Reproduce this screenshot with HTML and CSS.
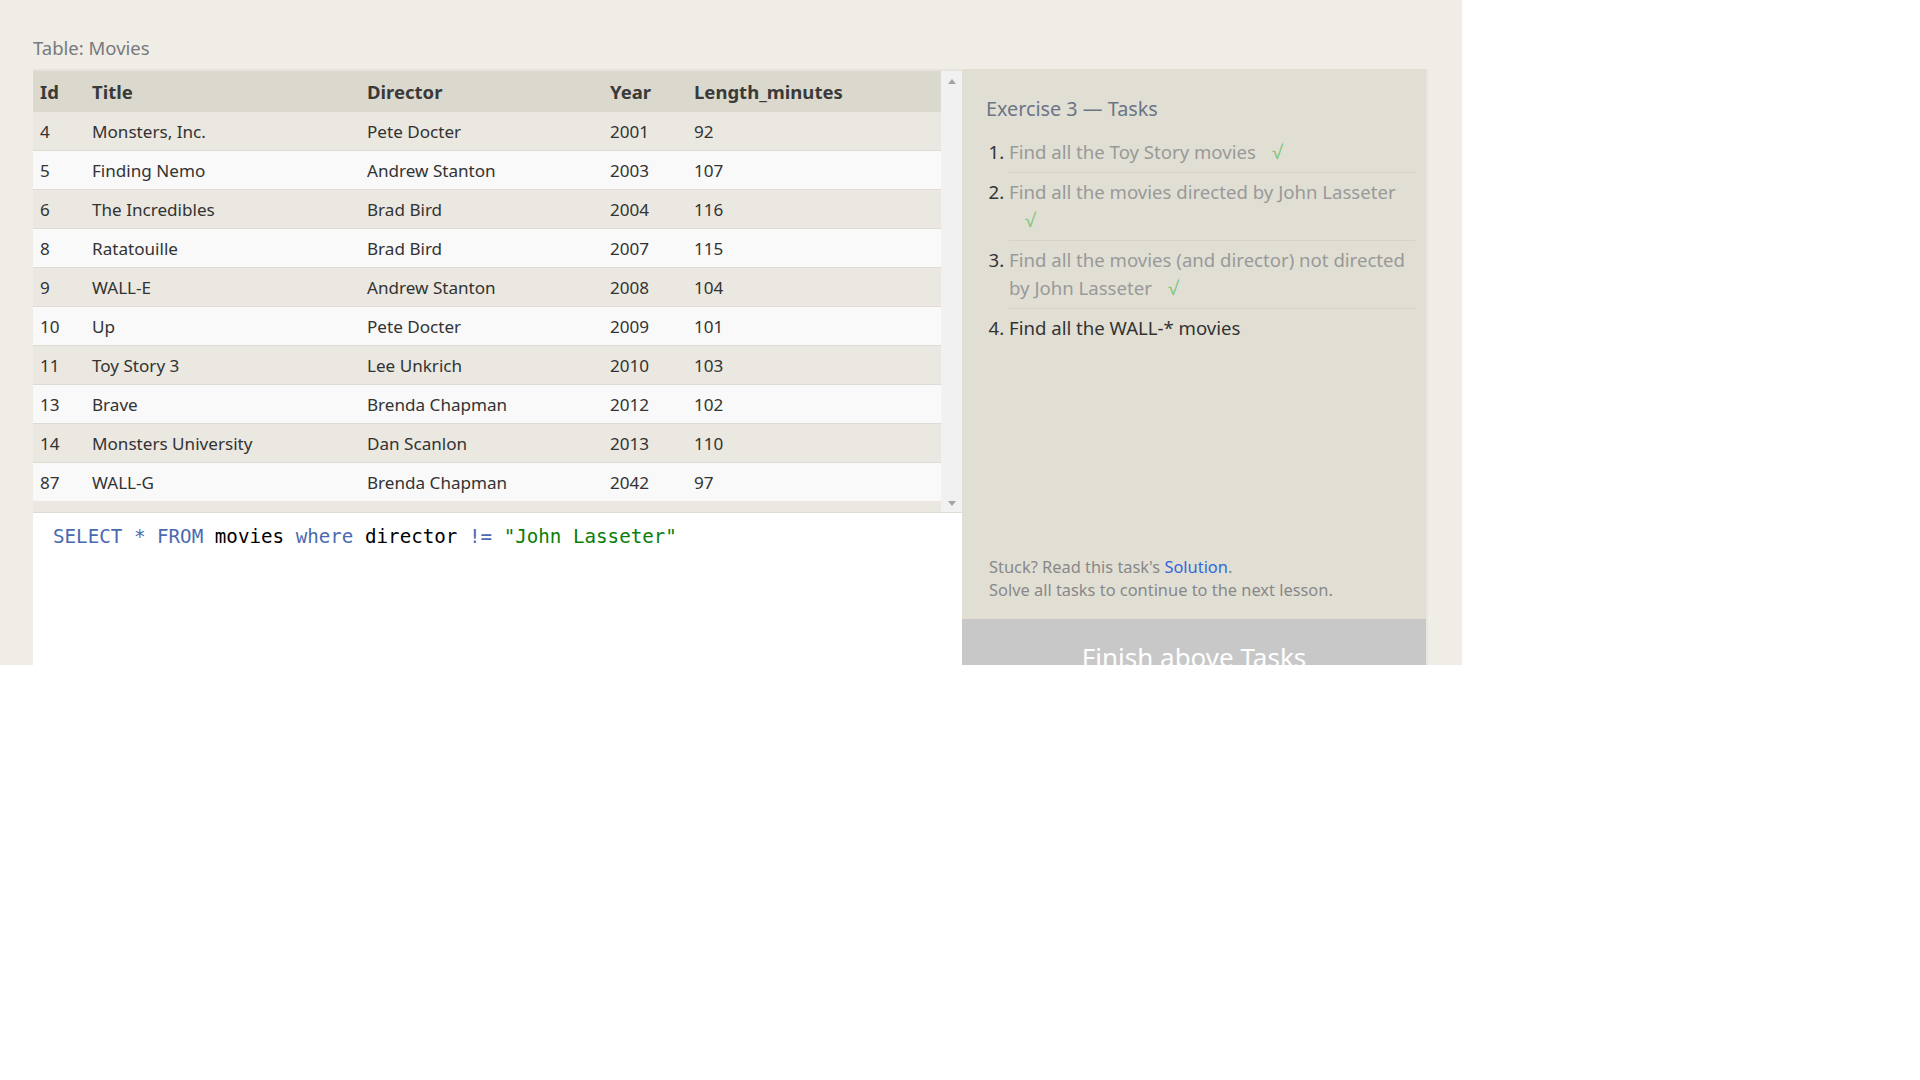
FILE: index.html
```html
<!DOCTYPE html>
<html lang="en">
<head>
<meta charset="utf-8">
<title>SQL Lesson — Exercise 3</title>
<link rel="stylesheet" href="styles.css">
</head>
<body>
<div class="app">
  <div class="table-label">Table: Movies</div>
  <div class="main">
    <div class="left">
      <div class="table-wrap">
        <div class="table-scroll">
          <table class="results">
            <colgroup>
              <col class="c-id"><col class="c-title"><col class="c-director"><col class="c-year"><col class="c-len">
            </colgroup>
            <thead>
              <tr><th>Id</th><th>Title</th><th>Director</th><th>Year</th><th>Length_minutes</th></tr>
            </thead>
            <tbody>
              <tr><td>4</td><td>Monsters, Inc.</td><td>Pete Docter</td><td>2001</td><td>92</td></tr>
              <tr><td>5</td><td>Finding Nemo</td><td>Andrew Stanton</td><td>2003</td><td>107</td></tr>
              <tr><td>6</td><td>The Incredibles</td><td>Brad Bird</td><td>2004</td><td>116</td></tr>
              <tr><td>8</td><td>Ratatouille</td><td>Brad Bird</td><td>2007</td><td>115</td></tr>
              <tr><td>9</td><td>WALL-E</td><td>Andrew Stanton</td><td>2008</td><td>104</td></tr>
              <tr><td>10</td><td>Up</td><td>Pete Docter</td><td>2009</td><td>101</td></tr>
              <tr><td>11</td><td>Toy Story 3</td><td>Lee Unkrich</td><td>2010</td><td>103</td></tr>
              <tr><td>13</td><td>Brave</td><td>Brenda Chapman</td><td>2012</td><td>102</td></tr>
              <tr><td>14</td><td>Monsters University</td><td>Dan Scanlon</td><td>2013</td><td>110</td></tr>
              <tr><td>87</td><td>WALL-G</td><td>Brenda Chapman</td><td>2042</td><td>97</td></tr>
            </tbody>
          </table>
        </div>
        <div class="scrollbar">
          <span class="arrow arrow-up"></span>
          <span class="arrow arrow-down"></span>
        </div>
      </div>
      <div class="editor"><code><span class="kw">SELECT</span> <span class="kw">*</span> <span class="kw">FROM</span> <span class="id">movies</span> <span class="kw">where</span> <span class="id">director</span> <span class="kw">!=</span> <span class="str">"John Lasseter"</span></code></div>
    </div>
    <div class="panel">
      <h2 class="panel-title">Exercise 3 — Tasks</h2>
      <ol class="tasks">
        <li class="done"><span class="task-text">Find all the Toy Story movies</span><wbr><span class="check">√</span></li>
        <li class="done"><span class="task-text">Find all the movies directed by John Lasseter</span><wbr><span class="check">√</span></li>
        <li class="done"><span class="task-text">Find all the movies (and director) not directed by John Lasseter</span><wbr><span class="check">√</span></li>
        <li class="current"><span class="task-text">Find all the WALL-* movies</span></li>
      </ol>
      <div class="help">
        <p>Stuck? Read this task's <a href="#" class="solution">Solution</a>.</p>
        <p>Solve all tasks to continue to the next lesson.</p>
      </div>
      <div class="finish">Finish above Tasks</div>
    </div>
  </div>
</div>
</body>
</html>
```
FILE: styles.css
```css
html, body {
  margin: 0;
  padding: 0;
  background: #ffffff;
}

.app {
  width: 1462px;
  height: 665px;
  overflow: hidden;
  box-sizing: border-box;
  padding: 36px 34px 0 33px;
  background: #efede5;
  font-family: "Noto Sans", "Open Sans", sans-serif;
  color: #333333;
}

.table-label {
  height: 33px;
  font-size: 18.5px;
  line-height: 23px;
  color: #777a80;
}

.main {
  display: flex;
  height: 638px;
}

.left {
  width: 929px;
  display: flex;
  flex-direction: column;
}

.table-wrap {
  display: flex;
  border-top: 2px solid #e6e4dc;
  border-bottom: 1px solid #dddbd3;
}

.table-scroll {
  width: 908px;
  background: #eae8e0;
  padding-bottom: 11px;
}

.results {
  width: 908px;
  table-layout: fixed;
  border-collapse: collapse;
  font-size: 17.1px;
}

.c-id { width: 52px; }
.c-title { width: 275px; }
.c-director { width: 243px; }
.c-year { width: 84px; }
.c-len { width: 254px; }

.results th {
  height: 41px;
  padding: 0 0 0 7px;
  text-align: left;
  font-size: 18.5px;
  font-weight: 700;
  background: #dbd9cd;
  color: #3a3a3a;
}

.results td {
  height: 38px;
  padding: 0 0 0 7px;
  border-bottom: 1px solid #dedcd4;
  color: #333333;
}

.results tbody tr:nth-child(odd) td { background: #eae8e0; }
.results tbody tr:nth-child(even) td { background: #f9f9f9; }
.results tbody tr:last-child td { border-bottom: none; }

.scrollbar {
  width: 21px;
  background: #f1f1f1;
  display: flex;
  flex-direction: column;
  justify-content: space-between;
  align-items: center;
  padding: 8px 0 6px;
  box-sizing: border-box;
}

.arrow {
  width: 0;
  height: 0;
  border-left: 4px solid transparent;
  border-right: 4px solid transparent;
}

.arrow-up { border-bottom: 5px solid #a3a3a3; }
.arrow-down { border-top: 5px solid #a3a3a3; }

.editor {
  flex: 1;
  background: #ffffff;
  padding: 12px 20px;
  font-family: "DejaVu Sans Mono", "Liberation Mono", monospace;
  font-size: 19.2px;
  line-height: 24px;
}

.editor .kw { color: #4a6ab0; }
.editor .id { color: #000000; }
.editor .str { color: #0a7d0a; }

.panel {
  width: 466px;
  box-sizing: border-box;
  background: #e1dfd4;
  border-right: 2px solid #e8e6de;
  display: flex;
  flex-direction: column;
  padding: 26px 0 0 24px;
}

.panel-title {
  margin: 0 0 10px;
  font-size: 19.8px;
  line-height: 28px;
  font-weight: 400;
  color: #6b7585;
}

.tasks {
  margin: 0 11px 0 0;
  padding: 0 0 0 23px;
  font-size: 18.6px;
  line-height: 28px;
}

.tasks li {
  padding: 5px 0 6px;
  border-bottom: 1px solid #d6d4ca;
  color: #333333;
}

.tasks li:last-child { border-bottom: none; }

.tasks li.done .task-text { color: #999999; }
.tasks li.current .task-text { color: #333333; }

.check {
  margin-left: 16px;
  font-size: 19px;
  color: #80c680;
}

.help {
  margin-top: auto;
  padding: 0 0 18px 3px;
  font-size: 16.4px;
  line-height: 23px;
  color: #888888;
}

.help p { margin: 0; }

.solution {
  color: #3366dd;
  text-decoration: none;
}

.finish {
  flex-shrink: 0;
  margin-left: -24px;
  background: #c8c8c8;
  color: #ffffff;
  text-align: center;
  font-size: 26px;
  line-height: 40px;
  padding: 18px 0 30px;
}
```
